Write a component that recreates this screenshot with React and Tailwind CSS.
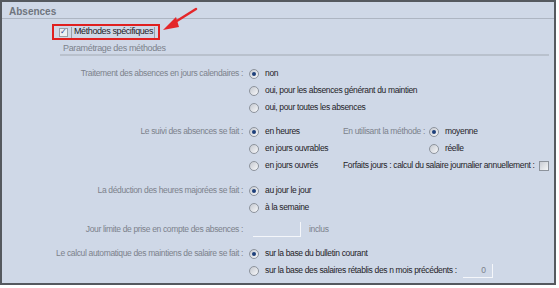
import React from "react";

const F = { fontFamily: '"Liberation Sans", Arial, sans-serif' };

function Radio({ on }) {
  return (
    <span className="relative inline-flex w-[10px] h-[10px] rounded-full border border-[#8d939c] bg-gradient-to-br from-[#c5c9d0] to-[#f7f8fa] items-center justify-center shrink-0">
      {on && <span className="w-[4px] h-[4px] rounded-full bg-[#1d3f7a]" />}
    </span>
  );
}

function Opt({ on, children }) {
  return (
    <div className="flex items-center h-[17px] gap-[6px]">
      <Radio on={on} />
      <span className="text-[#1f2328]">{children}</span>
    </div>
  );
}

function Row({ label, children }) {
  return (
    <div className="flex h-[17px] items-center">
      <div className="w-[245px] text-right pr-[4px] text-[#7c828c] whitespace-nowrap">{label}</div>
      <div className="pl-[2px] flex items-center whitespace-nowrap">{children}</div>
    </div>
  );
}

export default function App() {
  return (
    <div className="relative w-[559px] h-[288px] bg-white" style={F}>
      <div className="w-[556px] h-[285px] border-l-2 border-t-2 border-r-2 border-b-2 border-[#55595f] bg-[#cfd8e7] text-[8.5px] tracking-[-0.35px] overflow-hidden">
        <div className="h-[17px] pl-[7px] pt-[2px] flex items-center border-b border-[#adb5c2] text-[#6f757e] font-bold text-[10px] tracking-normal">
          Absences
        </div>
        <div className="mt-[5px] ml-[50px] w-[108px] h-[16px] border-2 border-[#e02020] flex items-center whitespace-nowrap">
          <span className="ml-[5px] w-[9px] h-[9px] border border-[#9aa0a8] bg-[#eef0f4] flex items-center justify-center text-[#2a3f8f] text-[8px] leading-none shrink-0">✓</span>
          <span className="ml-[3px] w-px h-[11px] bg-[#9aa0a8] shrink-0" />
          <span className="ml-[2px] text-[#1f2328] text-[9px] tracking-[-0.4px]">Méthodes spécifiques</span>
          <span className="ml-auto mr-[3px] w-px h-[11px] bg-[#9aa0a8] shrink-0" />
        </div>
        <div className="mt-[3px] ml-[58px] mr-[5px] h-[13px] border-b-2 border-[#b9c1cd] text-[#7c828c] text-[9px] pl-[3px] leading-[10px]">
          Paramétrage des méthodes
        </div>

        <div className="mt-[9px]">
          <Row label="Traitement des absences en jours calendaires :">
            <Opt on>non</Opt>
          </Row>
          <Row label=""><Opt>oui, pour les absences générant du maintien</Opt></Row>
          <Row label=""><Opt>oui, pour toutes les absences</Opt></Row>
        </div>

        <div className="mt-[7px] flex">
          <div className="w-[341px] shrink-0">
            <Row label="Le suivi des absences se fait :"><Opt on>en heures</Opt></Row>
            <Row label=""><Opt>en jours ouvrables</Opt></Row>
            <Row label=""><Opt>en jours ouvrés</Opt></Row>
          </div>
          <div>
            <div className="flex h-[17px] items-center">
              <span className="w-[86px] text-[#7c828c] whitespace-nowrap">En utilisant la méthode :</span>
              <Opt on>moyenne</Opt>
            </div>
            <div className="flex h-[17px] items-center pl-[86px]">
              <Opt>réelle</Opt>
            </div>
            <div className="flex h-[17px] items-center whitespace-nowrap">
              <span className="text-[#1f2328]">Forfaits jours : calcul du salaire journalier annuellement :</span>
              <span className="ml-[4px] w-[10px] h-[10px] border border-[#8d939c] bg-gradient-to-br from-[#c9cdd4] to-[#f5f6f8]" />
            </div>
          </div>
        </div>

        <div className="mt-[8px]">
          <Row label="La déduction des heures majorées se fait :"><Opt on>au jour le jour</Opt></Row>
          <Row label=""><Opt>à la semaine</Opt></Row>
        </div>

        <div className="mt-[5px] flex h-[17px] items-center">
          <div className="w-[245px] text-right pr-[4px] text-[#7c828c] whitespace-nowrap">Jour limite de prise en compte des absences :</div>
          <div className="ml-[6px] w-[48px] h-[15px] border-r border-b border-[#f4f6fa]" />
          <span className="ml-[8px] text-[#7c828c]">inclus</span>
        </div>

        <div className="mt-[7px]">
          <Row label="Le calcul automatique des maintiens de salaire se fait :"><Opt on>sur la base du bulletin courant</Opt></Row>
          <Row label="">
            <Opt>sur la base des salaires rétablis des n mois précédents :</Opt>
            <span className="ml-[6px] w-[30px] h-[14px] border-r border-b border-[#f4f6fa] text-right pr-[6px] text-[#7c828c]">0</span>
          </Row>
        </div>
      </div>

      <svg className="absolute left-0 top-0" width="559" height="288" viewBox="0 0 559 288">
        <line x1="196" y1="9" x2="172" y2="24" stroke="#e4262a" strokeWidth="2.5" strokeLinecap="round" />
        <polygon points="163,30 176,17 179,27" fill="#e4262a" />
      </svg>
    </div>
  );
}
